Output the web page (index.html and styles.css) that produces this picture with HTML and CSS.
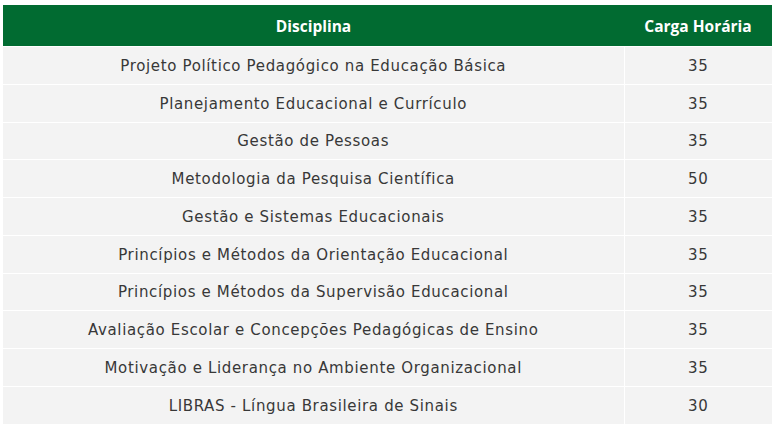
FILE: index.html
```html
<!DOCTYPE html>
<html lang="pt-BR">
<head>
<meta charset="utf-8">
<link rel="stylesheet" href="styles.css">
</head>
<body>
<table class="grade">
  <thead>
    <tr><th class="col-disc">Disciplina</th><th class="col-carga">Carga Horária</th></tr>
  </thead>
  <tbody>
    <tr><td>Projeto Político Pedagógico na Educação Básica</td><td>35</td></tr>
    <tr><td>Planejamento Educacional e Currículo</td><td>35</td></tr>
    <tr><td>Gestão de Pessoas</td><td>35</td></tr>
    <tr><td>Metodologia da Pesquisa Científica</td><td>50</td></tr>
    <tr><td>Gestão e Sistemas Educacionais</td><td>35</td></tr>
    <tr><td>Princípios e Métodos da Orientação Educacional</td><td>35</td></tr>
    <tr><td>Princípios e Métodos da Supervisão Educacional</td><td>35</td></tr>
    <tr><td>Avaliação Escolar e Concepções Pedagógicas de Ensino</td><td>35</td></tr>
    <tr><td>Motivação e Liderança no Ambiente Organizacional</td><td>35</td></tr>
    <tr><td>LIBRAS - Língua Brasileira de Sinais</td><td>30</td></tr>
  </tbody>
</table>
</body>
</html>
```
FILE: styles.css
```css
html, body {
  margin: 0;
  background: #ffffff;
}
body {
  padding: 5px 0 0 3px;
  font-family: "Open Sans", "DejaVu Sans", sans-serif;
}
.grade {
  width: 769px;
  border-collapse: collapse;
  table-layout: fixed;
}
.grade th {
  background: #016b31;
  color: #ffffff;
  font-weight: 700;
  font-size: 15.5px;
  height: 41px;
  padding: 0;
  text-align: center;
}
.grade .col-disc { width: 621px; }
.grade td {
  background: #f3f3f3;
  color: #383838;
  font-family: "DejaVu Sans", sans-serif;
  font-size: 15px;
  letter-spacing: 0.65px;
  height: 35.75px;
  padding: 1px 0 0;
  text-align: center;
  border-top: 1px solid #ffffff;
  border-right: 1px solid #ffffff;
}
.grade td:last-child { border-right: 0; border-left: 1px solid #ffffff; }
```
